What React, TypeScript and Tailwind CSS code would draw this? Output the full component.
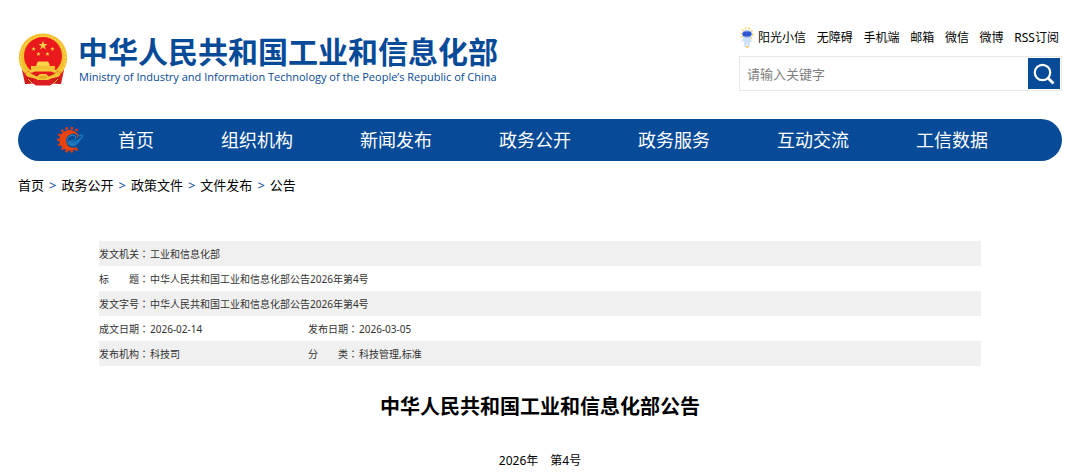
import React from 'react';

const quickLinks = ['无障碍', '手机端', '邮箱', '微信', '微博', 'RSS订阅'];
const navLinks = ['首页', '组织机构', '新闻发布', '政务公开', '政务服务', '互动交流', '工信数据'];
const crumbs = ['首页', '政务公开', '政策文件', '文件发布', '公告'];

type Field = { label: string; value: string };

const rows: Field[][] = [
  [{ label: '发文机关', value: '工业和信息化部' }],
  [{ label: '标　　题', value: '中华人民共和国工业和信息化部公告2026年第4号' }],
  [{ label: '发文字号', value: '中华人民共和国工业和信息化部公告2026年第4号' }],
  [
    { label: '成文日期', value: '2026-02-14' },
    { label: '发布日期', value: '2026-03-05' },
  ],
  [
    { label: '发布机构', value: '科技司' },
    { label: '分　　类', value: '科技管理,标准' },
  ],
];

const starPath =
  'M0 -1 L0.225 -0.309 L0.951 -0.309 L0.363 0.118 L0.588 0.809 L0 0.382 L-0.588 0.809 L-0.363 0.118 L-0.951 -0.309 L-0.225 -0.309 Z';

function Emblem() {
  return (
    <svg className="h-[53px] w-[50px] shrink-0" viewBox="0 0 50 53" aria-hidden="true">
      <path d="M4 37 H46 L43 51 L35 50.500 L32 52.500 H18 L15 50.500 L7 51 Z" fill="#dc1c20" />
      <path d="M25 0.500 A24 24 0 0 1 43 40.500 L37 36 H13 L7 40.500 A24 24 0 0 1 25 0.500 Z" fill="#f3bf2b" />
      <path d="M6.500 38 A22.300 22.300 0 1 1 43.500 38" fill="none" stroke="#f9d651" strokeWidth="1.500" strokeDasharray="2 1.500" />
      <circle cx="25" cy="23" r="19" fill="#e9191d" />
      <path d={starPath} transform="translate(25 12.500) scale(4.800)" fill="#f9d548" />
      <path d={starPath} transform="translate(15.600 16) scale(2.300)" fill="#f9d548" />
      <path d={starPath} transform="translate(34.400 16) scale(2.300)" fill="#f9d548" />
      <path d={starPath} transform="translate(20.500 21) scale(2.300)" fill="#f9d548" />
      <path d={starPath} transform="translate(29.500 21) scale(2.300)" fill="#f9d548" />
      <path d="M18.500 31 L20 28.500 H30 L31.500 31 V33 H18.500 Z" fill="#f9d548" />
      <path d="M13 33 H37 V36.500 H13 Z" fill="#f3c334" />
      <path d="M10 37.500 L15 36 H35 L40 37.500 L37 40 L33 38.500 H17 L13 40 Z" fill="#f6c93a" />
      <path d="M10 38 Q14 42 19 43.500 L22 41 H28 L31 43.500 Q36 42 40 38 L43 41 L40 44 L33 45.500 L30 47 H20 L17 45.500 L10 44 L7 41 Z" fill="#f3c334" />
      <path d="M21 44 Q25 41.500 29 44 L27.500 45.500 H22.500 Z" fill="#e9a52a" />
      <path d="M9 44 L16 46.500 L14 50 L7 51 Z M41 44 L34 46.500 L36 50 L43 51 Z" fill="#c9171c" />
      <path d="M10 46 L14 50 M40 46 L36 50" stroke="#f3c334" strokeWidth="1" />
    </svg>
  );
}

function GearMark() {
  return (
    <svg className="h-[28px] w-[28px] shrink-0" viewBox="0 0 28 28" aria-hidden="true">
      <path d="M21.500 4.800 A11.700 11.700 0 1 0 22 22.400" fill="none" stroke="#d93a1b" strokeWidth="2.600" strokeDasharray="2.600 2.400" />
      <path d="M22.500 9 A10.300 10.300 0 1 0 21.500 21 Q14 23.500 11.200 18.500 Q8.500 12.500 12.500 9.500 Q17 6 20.500 8.500 Q22 10 20.800 12.500 Q23 11.500 22.500 9 Z" fill="#ec430c" />
      <path d="M12 14.500 Q18.500 15.500 19.500 11.800 Q19.500 9 16 9.200 Q11.500 10.200 11 14.500 Z" fill="#064a98" />
      <path d="M12.500 15.200 Q18.500 15.500 20 11.800 Q20 9 16.200 9.200 Q11.500 10.200 11 14.500" fill="none" stroke="#2b8fc9" strokeWidth="1" />
      <path d="M10.800 15.500 Q19 17.500 25 11 Q23.500 19 17.500 20.200 Q12 20.500 10.800 15.500 Z" fill="#1a78bb" />
      <path d="M22 10.200 Q26.800 8 26.500 10.500 Q25 13.500 20.500 16" fill="none" stroke="#1a78bb" strokeWidth="1.300" />
    </svg>
  );
}

function Mascot() {
  return (
    <svg className="h-[22px] w-[14px] shrink-0" viewBox="0 0 14 22" aria-hidden="true">
      <circle cx="7" cy="7" r="5.800" fill="none" stroke="#f9cb55" strokeWidth="1.600" strokeDasharray="1.500 2" />
      <path d="M4 9 H10 L12 15 L10 14.500 L9.500 20 H7.800 L7 16 L6 20 H4.300 L4 14 L1.500 15 Z" fill="#cfe1fa" />
      <ellipse cx="7" cy="7" rx="5" ry="4" fill="#a9c3f3" />
      <rect x="2.500" y="4.500" width="9" height="5" rx="2.500" fill="#2f55d4" />
      <path d="M6 20 H8.500" stroke="#f6bf45" strokeWidth="1.500" />
    </svg>
  );
}

export default function App() {
  return (
    <div className="bg-white px-[18px] font-['Noto_Sans','Noto_Sans_CJK_SC',sans-serif] text-black">
      <header className="flex items-start justify-between gap-4 pt-[27px]">
        <a href="#home" className="mt-[6px] flex items-start gap-[10px] text-[#064a98]">
          <Emblem />
          <span className="flex flex-col whitespace-nowrap">
            <span className="text-[30px] leading-[37px] font-bold">中华人民共和国工业和信息化部</span>
            <span className="pl-px font-['Open_Sans',sans-serif] text-[11px] leading-[14px] font-medium">
              Ministry of Industry and Information Technology of the People’s Republic of China
            </span>
          </span>
        </a>
        <div className="w-[323px] shrink-0">
          <nav aria-label="快捷链接" className="flex h-[22px] items-center justify-between pr-[3px] text-[12px] leading-[22px] whitespace-nowrap">
            <a href="#mascot" className="flex items-center gap-1 pl-px">
              <Mascot />
              阳光小信
            </a>
            {quickLinks.map((link) => (
              <a key={link} href="#quick">{link}</a>
            ))}
          </nav>
          <form className="mt-[7px] flex h-[35px] items-center border border-[#e8e8e8] pr-px" onSubmit={(e) => e.preventDefault()}>
            <input
              type="text"
              aria-label="请输入关键字"
              placeholder="请输入关键字"
              className="h-full min-w-0 flex-1 px-[7px] text-[13px] outline-none placeholder:text-[#808080]"
            />
            <button type="submit" aria-label="搜索" className="flex h-[31px] w-8 items-center justify-center bg-[#064a98]">
              <svg className="h-[22px] w-[22px]" viewBox="0 0 22 22" fill="none" stroke="#fff" strokeWidth="2.200" aria-hidden="true">
                <circle cx="9.500" cy="9.500" r="7.700" />
                <path d="M15 15 L20.500 20.500" strokeWidth="2.800" />
              </svg>
            </button>
          </form>
        </div>
      </header>

      <nav aria-label="主导航" className="mt-[28px] flex h-[42px] items-center rounded-full bg-[#064a98] pl-[38px] text-white">
        <GearMark />
        <div className="ml-[34px] flex gap-[67px] text-[18px] leading-[42px] whitespace-nowrap">
          {navLinks.map((link) => (
            <a key={link} href="#section">{link}</a>
          ))}
        </div>
      </nav>

      <nav aria-label="面包屑" className="mt-[14px] flex gap-[5px] text-[13px] leading-[20px]">
        {crumbs.map((crumb, i) => (
          <React.Fragment key={crumb}>
            {i > 0 && <span className="text-[#064a98]">&gt;</span>}
            <a href="#crumb">{crumb}</a>
          </React.Fragment>
        ))}
      </nav>

      <main className="px-[81px] pt-[46px]">
        <table className="w-full table-fixed border-collapse text-[10px] leading-[24px] text-[#333]">
          <colgroup>
            <col className="w-[51px]" />
            <col className="w-[158px]" />
            <col className="w-[51px]" />
            <col />
          </colgroup>
          <tbody>
            {rows.map((fields) => (
              <tr key={fields[0].label} className="odd:bg-[#f0f0f0]">
                {fields.map((field) => (
                  <React.Fragment key={field.label}>
                    <th scope="row" className="p-0 pt-px text-left font-normal whitespace-nowrap">
                      {field.label}
                      <span className="font-['Noto_Sans_CJK_TC',sans-serif]" lang="zh-Hant">：</span>
                    </th>
                    <td colSpan={fields.length === 1 ? 3 : 1} className="p-0 pt-px">{field.value}</td>
                  </React.Fragment>
                ))}
              </tr>
            ))}
          </tbody>
        </table>
        <h1 className="mt-[26px] text-center text-[20px] leading-[30px] font-bold">中华人民共和国工业和信息化部公告</h1>
        <p className="mt-[29px] text-center text-[12px] leading-[20px]">2026年　第4号</p>
      </main>
    </div>
  );
}
